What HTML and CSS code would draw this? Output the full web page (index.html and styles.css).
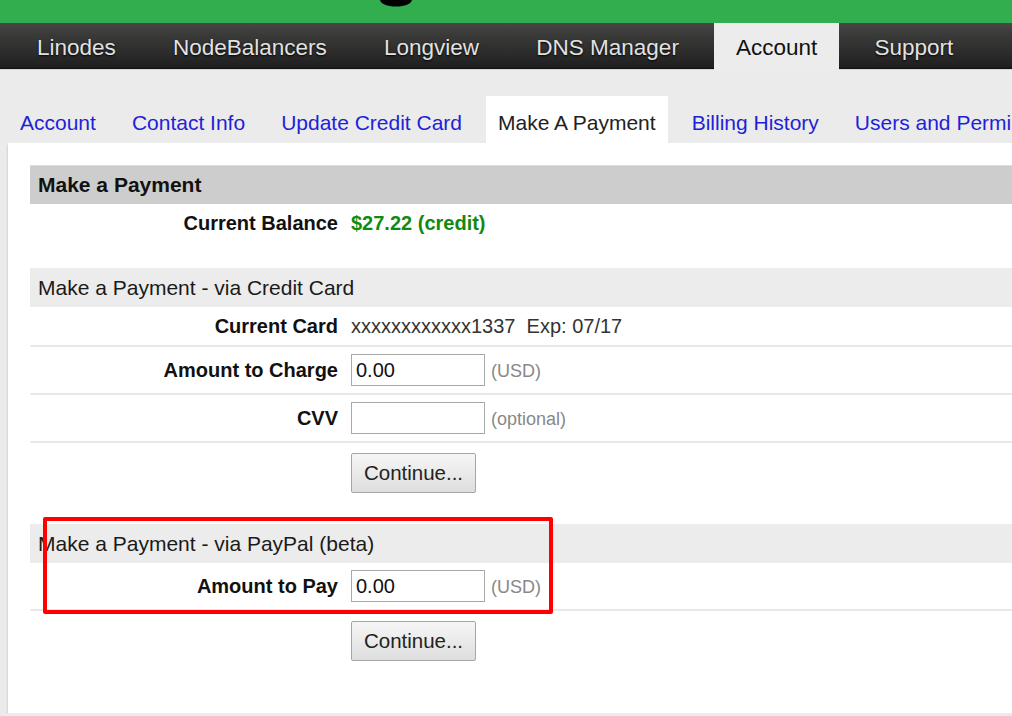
FILE: index.html
```html
<!DOCTYPE html>
<html>
<head>
<meta charset="utf-8">
<link rel="stylesheet" href="styles.css">
</head>
<body>
<div class="page">
  <header class="topbar">
    <svg class="logo" width="32" height="7" viewBox="0 0 32 7"><path d="M0 0 H32 C31 4 25 6.5 16 6.5 C7 6.5 1 4 0 0 Z" fill="#000"/></svg>
  </header>
  <nav class="mainnav">
    <a class="navitem">Linodes</a>
    <a class="navitem">NodeBalancers</a>
    <a class="navitem">Longview</a>
    <a class="navitem">DNS Manager</a>
    <a class="navitem active">Account</a>
    <a class="navitem">Support</a>
  </nav>
  <div class="subtabs">
    <a class="subtab">Account</a>
    <a class="subtab">Contact Info</a>
    <a class="subtab">Update Credit Card</a>
    <a class="subtab active">Make A Payment</a>
    <a class="subtab">Billing History</a>
    <a class="subtab">Users and Permissions</a>
  </div>
  <main class="panel">
    <section class="section">
      <div class="head head-dark">Make a Payment</div>
      <div class="row row-plain">
        <div class="label">Current Balance</div>
        <div class="value credit">$27.22 (credit)</div>
      </div>
    </section>

    <section class="section">
      <div class="head">Make a Payment - via Credit Card</div>
      <div class="row row-text">
        <div class="label">Current Card</div>
        <div class="value">xxxxxxxxxxxx1337&nbsp; Exp: 07/17</div>
      </div>
      <div class="row">
        <div class="label">Amount to Charge</div>
        <div class="value"><input class="field" type="text" value="0.00"><span class="note">(USD)</span></div>
      </div>
      <div class="row">
        <div class="label">CVV</div>
        <div class="value"><input class="field" type="text" value=""><span class="note">(optional)</span></div>
      </div>
      <div class="row row-btn">
        <div class="label"></div>
        <div class="value"><button class="btn">Continue...</button></div>
      </div>
    </section>

    <section class="section paypal">
      <div class="head">Make a Payment - via PayPal (beta)</div>
      <div class="row">
        <div class="label">Amount to Pay</div>
        <div class="value"><input class="field" type="text" value="0.00"><span class="note">(USD)</span></div>
      </div>
      <div class="row row-btn">
        <div class="label"></div>
        <div class="value"><button class="btn">Continue...</button></div>
      </div>
      <div class="highlight"></div>
    </section>
  </main>
</div>
</body>
</html>
```
FILE: styles.css
```css
html, body {
  margin: 0;
  padding: 0;
  overflow: hidden;
  background: #ebebeb;
  font-family: "Liberation Sans", Arial, sans-serif;
}
.page {
  width: 1240px;
}
.topbar {
  height: 23px;
  background: #33ae4f;
  display: flex;
  align-items: flex-start;
}
.logo {
  display: block;
  margin-left: 380px;
}
.mainnav {
  height: 46px;
  display: flex;
  gap: 13.2px;
  padding-left: 15px;
  background: linear-gradient(#484745 0%, #3a3a39 25%, #2a2a2a 70%, #1e1e1e 96%, #0e0e0e 100%);
  border-bottom: 1px solid #d6d6d6;
}
.navitem {
  display: block;
  padding: 3px 22px 0;
  line-height: 43px;
  font-size: 22.5px;
  color: #e2e2e2;
  text-shadow: 0 1px 2px #000;
}
.navitem.active {
  background: #ececec;
  color: #111;
  text-shadow: none;
  height: 44px;
}
.subtabs {
  display: flex;
  gap: 12px;
  margin: 26px 0 0 8px;
}
.subtab {
  display: block;
  padding: 15px 12px 8px;
  line-height: 24px;
  font-size: 21px;
  color: #1f1fd8;
  white-space: nowrap;
}
.subtab.active {
  background: #fff;
  color: #222;
}
.panel {
  margin-left: 8px;
  background: #fff;
  padding: 22px 22px 46px;
  box-shadow: 0 2px 2px rgba(0, 0, 0, 0.25);
}
.section {
  margin-bottom: 25px;
}
.section:last-child {
  margin-bottom: 0;
}
.paypal {
  position: relative;
}
.head {
  height: 39px;
  line-height: 39px;
  padding-left: 8px;
  background: #ececec;
  font-size: 21px;
  color: #1a1a1a;
}
.head-dark {
  background: #cdcdcd;
  border-top: 1px solid #dedede;
  height: 38px;
  line-height: 38px;
  font-weight: bold;
  color: #111;
}
.row {
  display: grid;
  grid-template-columns: 321px 1fr;
  align-items: center;
  padding: 7px 0;
  border-bottom: 2px solid #e8e8e8;
}
.row-plain {
  border-bottom: none;
  padding: 0;
  height: 39px;
}
.row-text {
  padding: 0;
  height: 38px;
}
.row-btn {
  border-bottom: none;
  padding: 10px 0 6px;
}
.label {
  text-align: right;
  padding-right: 13px;
  font-size: 20px;
  font-weight: bold;
  color: #111;
}
.value {
  display: flex;
  align-items: center;
  font-size: 20px;
  color: #333;
}
.credit {
  color: #118a11;
  font-weight: bold;
}
.field {
  box-sizing: border-box;
  width: 134px;
  height: 32px;
  margin: 0;
  padding: 0 4px;
  border: 1px solid #a9a9a9;
  font-family: "Liberation Sans", Arial, sans-serif;
  font-size: 20px;
  color: #111;
  background: #fff;
}
.note {
  margin-left: 6px;
  padding-top: 3px;
  font-size: 18px;
  color: #888;
}
.btn {
  box-sizing: border-box;
  width: 125px;
  height: 40px;
  margin: 0;
  padding: 0;
  border: 1px solid #a6a6a6;
  border-radius: 2px;
  background: linear-gradient(#f6f6f6, #dedede);
  font-family: "Liberation Sans", Arial, sans-serif;
  font-size: 20.5px;
  color: #222;
}
.highlight {
  position: absolute;
  left: 13px;
  top: -7px;
  width: 510px;
  height: 97px;
  box-sizing: border-box;
  border: 4px solid #ff0000;
  border-radius: 2px;
}
```
